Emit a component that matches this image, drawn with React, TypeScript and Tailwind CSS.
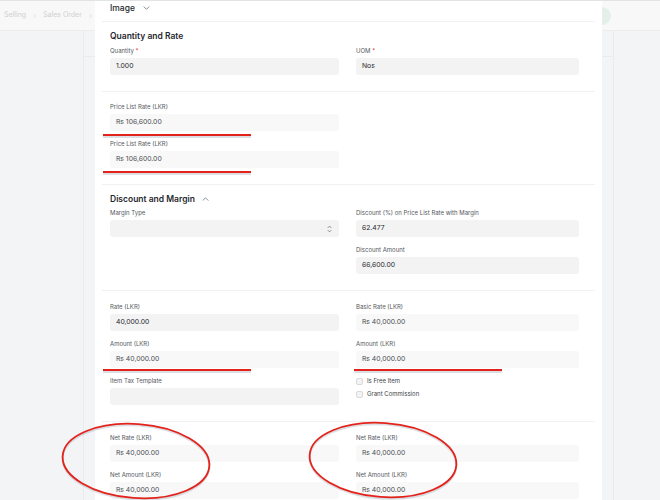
import React from 'react';

type FieldProps = {
  label: string;
  value?: string;
  required?: boolean;
  readOnly?: boolean;
  select?: boolean;
};

function Field({ label, value, required, readOnly, select }: FieldProps) {
  return (
    <div className="mb-[8px]">
      <div className="h-[10px] leading-[10px] text-[6px] text-[#54585e] whitespace-nowrap">
        {label}
        {required && <span className="text-[#e03636]"> *</span>}
      </div>
      <div
        className={
          readOnly
            ? 'mt-[2px] h-[17px] rounded-[3px] pl-[6px] pr-[7px] flex items-center text-[6.8px] bg-[#f8f8f8] text-[#4b4f55]'
            : 'mt-[2px] h-[17px] rounded-[3px] pl-[6px] pr-[7px] flex items-center text-[6.8px] bg-[#f3f3f3] text-[#1f272e]'
        }
      >
        <span className="flex-1">{value}</span>
        {select && (
          <svg width="5" height="8" viewBox="0 0 5 8" fill="none" stroke="#6b7280" strokeWidth="0.8" strokeLinecap="round" strokeLinejoin="round">
            <path d="M1 2.6 L2.5 1.1 L4 2.6" />
            <path d="M1 5.4 L2.5 6.9 L4 5.4" />
          </svg>
        )}
      </div>
    </div>
  );
}

function Check({ label }: { label: string }) {
  return (
    <div className="h-[10px] flex items-center gap-[4px]">
      <div className="w-[7px] h-[7px] rounded-[2px] border border-[#d7d9dc] bg-[#f3f3f3]" />
      <span className="text-[6px] text-[#3a3f45] leading-[10px]">{label}</span>
    </div>
  );
}

function Chevron({ up }: { up?: boolean }) {
  return (
    <svg width="7" height="4" viewBox="0 0 7 4" fill="none" stroke="#6b7280" strokeWidth="0.8" strokeLinecap="round" strokeLinejoin="round">
      <path d={up ? 'M1 3.3 L3.5 0.8 L6 3.3' : 'M1 0.8 L3.5 3.3 L6 0.8'} />
    </svg>
  );
}

function Crumb() {
  return (
    <svg width="5" height="6" viewBox="0 0 5 6" fill="none" stroke="#d4d5d7" strokeWidth="0.7">
      <path d="M1.5 1 L3.5 3 L1.5 5" />
    </svg>
  );
}

export default function App() {
  return (
    <div
      className="relative w-[660px] h-[500px] overflow-hidden bg-[#f3f4f6]"
      style={{ fontFamily: 'Inter, "Noto Sans", sans-serif' }}
    >
      {/* page behind the dialog */}
      <div className="h-px bg-[#e2e3e5]" />
      <div className="h-[30px] bg-[#f8f8f8] border-b border-[#ebecee] flex items-center pl-[4px] gap-[6px] text-[7px] text-[#cfd0d2]">
        <span>Selling</span>
        <Crumb />
        <span>Sales Order</span>
        <Crumb />
        <span>SA</span>
      </div>
      <div className="flex h-[469px]">
        <div className="w-[84px] border-r border-[#eaebed]" />
        <div className="flex-1 flex flex-col">
          <div className="h-[26px] border-b border-[#eaebed]" />
        </div>
        <div className="w-[47px] border-l border-[#eaebed]" />
      </div>
      <div className="absolute left-[593px] top-[7px] w-[18px] h-[18px] rounded-full bg-[#e5efe9]" />

      {/* dialog */}
      <div className="absolute left-[95px] top-[1px] w-[507px] h-[499px] bg-white">
        <div className="mx-[7px] h-[21px] border-b border-[#f1f1f2] pl-[8px] pt-[1px]">
          <div className="h-[12px] flex items-center gap-[8px] text-[8.5px] font-medium text-[#1f272e]">
            Image
            <Chevron />
          </div>
        </div>

        <div className="mx-[7px] border-b border-[#f1f1f2] pl-[8px] pr-[15px] pt-[8px] pb-[8px]">
          <div className="h-[12px] mb-[4px] flex items-center text-[8.5px] font-semibold text-[#1f272e]">
            Quantity and Rate
          </div>
          <div className="grid grid-cols-[229px_223px] gap-x-[17px]">
            <Field label="Quantity" required value="1.000" />
            <Field label="UOM" required value="Nos" />
          </div>
        </div>

        <div className="mx-[7px] border-b border-[#f1f1f2] pl-[8px] pr-[15px] pt-[10px] pb-[8px]">
          <div className="grid grid-cols-[229px_223px] gap-x-[17px]">
            <div>
              <Field label="Price List Rate (LKR)" value="Rs 106,600.00" readOnly />
              <Field label="Price List Rate (LKR)" value="Rs 106,600.00" readOnly />
            </div>
            <div />
          </div>
        </div>

        <div className="mx-[7px] border-b border-[#f1f1f2] pl-[8px] pr-[15px] pt-[8px] pb-[8px]">
          <div className="h-[12px] mb-[3px] flex items-center gap-[7px] text-[8.5px] font-semibold text-[#1f272e]">
            Discount and Margin
            <Chevron up />
          </div>
          <div className="grid grid-cols-[229px_223px] gap-x-[17px]">
            <div>
              <Field label="Margin Type" value="" select />
            </div>
            <div>
              <Field label="Discount (%) on Price List Rate with Margin" value="62.477" />
              <Field label="Discount Amount" value="66,600.00" />
            </div>
          </div>
        </div>

        <div className="mx-[7px] border-b border-[#f1f1f2] pl-[8px] pr-[15px] pt-[11px] pb-[8px]">
          <div className="grid grid-cols-[229px_223px] gap-x-[17px]">
            <div>
              <Field label="Rate (LKR)" value="40,000.00" />
              <Field label="Amount (LKR)" value="Rs 40,000.00" readOnly />
              <Field label="Item Tax Template" value="" />
            </div>
            <div>
              <Field label="Basic Rate (LKR)" value="Rs 40,000.00" readOnly />
              <Field label="Amount (LKR)" value="Rs 40,000.00" readOnly />
              <div className="flex flex-col gap-[3px]">
                <Check label="Is Free Item" />
                <Check label="Grant Commission" />
              </div>
            </div>
          </div>
        </div>

        <div className="mx-[7px] pl-[8px] pr-[15px] pt-[11px]">
          <div className="grid grid-cols-[229px_223px] gap-x-[17px]">
            <div>
              <Field label="Net Rate (LKR)" value="Rs 40,000.00" readOnly />
              <Field label="Net Amount (LKR)" value="Rs 40,000.00" readOnly />
            </div>
            <div>
              <Field label="Net Rate (LKR)" value="Rs 40,000.00" readOnly />
              <Field label="Net Amount (LKR)" value="Rs 40,000.00" readOnly />
            </div>
          </div>
        </div>
      </div>

      {/* red annotations drawn over the screenshot */}
      <svg className="absolute inset-0 pointer-events-none" width="660" height="500" viewBox="0 0 660 500">
        <g stroke="#9ca3af" strokeOpacity="0.35" strokeWidth="2" fill="none">
          <path d="M103 137 H251" />
          <path d="M103 174 H251" />
          <path d="M103 372 H251" />
          <path d="M354 372 H502" />
          <ellipse cx="136" cy="462.5" rx="73.5" ry="37" transform="rotate(4 136 462.5)" />
          <ellipse cx="383" cy="461.5" rx="73.5" ry="37" transform="rotate(4 383 461.5)" />
        </g>
        <g stroke="#e3231b" strokeWidth="1.8" fill="none">
          <path d="M103 135 H251" />
          <path d="M103 172 H251" />
          <path d="M103 370 H251" />
          <path d="M354 370 H502" />
          <ellipse cx="136" cy="461" rx="73.5" ry="37" transform="rotate(4 136 461)" />
          <ellipse cx="383" cy="460" rx="73.5" ry="37" transform="rotate(4 383 460)" />
        </g>
      </svg>
    </div>
  );
}
